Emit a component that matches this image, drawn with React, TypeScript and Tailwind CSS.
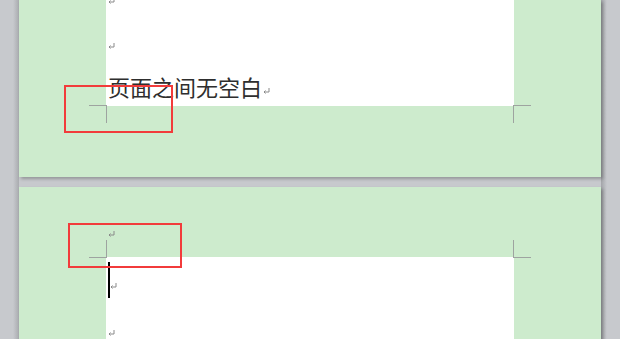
import React from "react";

function ReturnMark({ className = "" }: { className?: string }) {
  return (
    <svg
      width="7"
      height="6"
      viewBox="0 0 7 6"
      className={className}
      fill="none"
      stroke="#8a8a8a"
      strokeWidth="1"
    >
      <path d="M6 0 V4 H1" />
      <path d="M2.5 2.5 L1 4 L2.5 5.5" />
    </svg>
  );
}

function CornerMark({ pos }: { pos: "bl" | "br" | "tl" | "tr" }) {
  // crop marks sitting on the corners of the text area
  const box = {
    bl: "left-[-17px] top-[calc(100%-1px)] border-r border-t",
    br: "right-[-17px] top-[calc(100%-1px)] border-l border-t",
    tl: "left-[-17px] bottom-[calc(100%-1px)] border-r border-b",
    tr: "right-[-17px] bottom-[calc(100%-1px)] border-l border-b",
  }[pos];
  return (
    <div
      className={`absolute h-[18px] w-[18px] border-[#9ea3a0] ${box}`}
    ></div>
  );
}

export default function App() {
  return (
    <div
      className="relative h-[339px] w-[620px] overflow-hidden bg-[#c7c9cd]"
      style={{ fontFamily: '"Noto Sans CJK SC", "Noto Sans", sans-serif' }}
    >
      <div className="absolute left-[13px] top-0 h-full w-[6px] bg-gradient-to-r from-[#c7c9cd] to-[#a9abaf]"></div>
      <div className="absolute right-[13px] top-0 h-full w-[6px] bg-gradient-to-r from-[#a2a4a8] to-[#c7c9cd]"></div>

      <div className="flex flex-col gap-[10px] pl-[19px] pr-[19px]">
        {/* page 1 (bottom part) */}
        <div className="relative h-[177px] bg-[#cdebcd] shadow-[2px_2px_3px_rgba(0,0,0,0.25)]">
          <div className="relative mx-[87px] h-[106px] bg-white">
            <div className="flex flex-col pl-[2px]">
              <ReturnMark className="mt-[-2px]" />
              <ReturnMark className="mt-[39px]" />
              <div className="mt-[23px] flex items-end text-[22px] leading-[28px] text-[#2e2e2e]">
                <span>页面之间无空白</span>
                <ReturnMark className="mb-[6px] ml-[1px]" />
              </div>
            </div>
            <CornerMark pos="bl" />
            <CornerMark pos="br" />
          </div>
        </div>

        {/* page 2 (top part) */}
        <div className="relative h-[200px] bg-[#cdebcd] shadow-[2px_2px_3px_rgba(0,0,0,0.25)]">
          <div className="relative ml-[87px] mr-[87px] mt-[70px] h-[130px] bg-white">
            <div className="absolute left-[2px] top-[-26px]">
              <ReturnMark />
            </div>
            <div className="flex flex-col pl-[2px]">
              <div className="relative mt-[5px] h-[36px]">
                <div className="absolute left-0 top-0 h-[36px] w-[2px] bg-black"></div>
                <ReturnMark className="absolute left-[2px] top-[21px]" />
              </div>
              <ReturnMark className="mt-[32px]" />
            </div>
            <CornerMark pos="tl" />
            <CornerMark pos="tr" />
          </div>
        </div>
      </div>

      {/* red highlight boxes */}
      <div className="absolute left-[64px] top-[85px] h-[48px] w-[109px] border-2 border-[#f23b3b]"></div>
      <div className="absolute left-[68px] top-[223px] h-[45px] w-[114px] border-2 border-[#f23b3b]"></div>
    </div>
  );
}
